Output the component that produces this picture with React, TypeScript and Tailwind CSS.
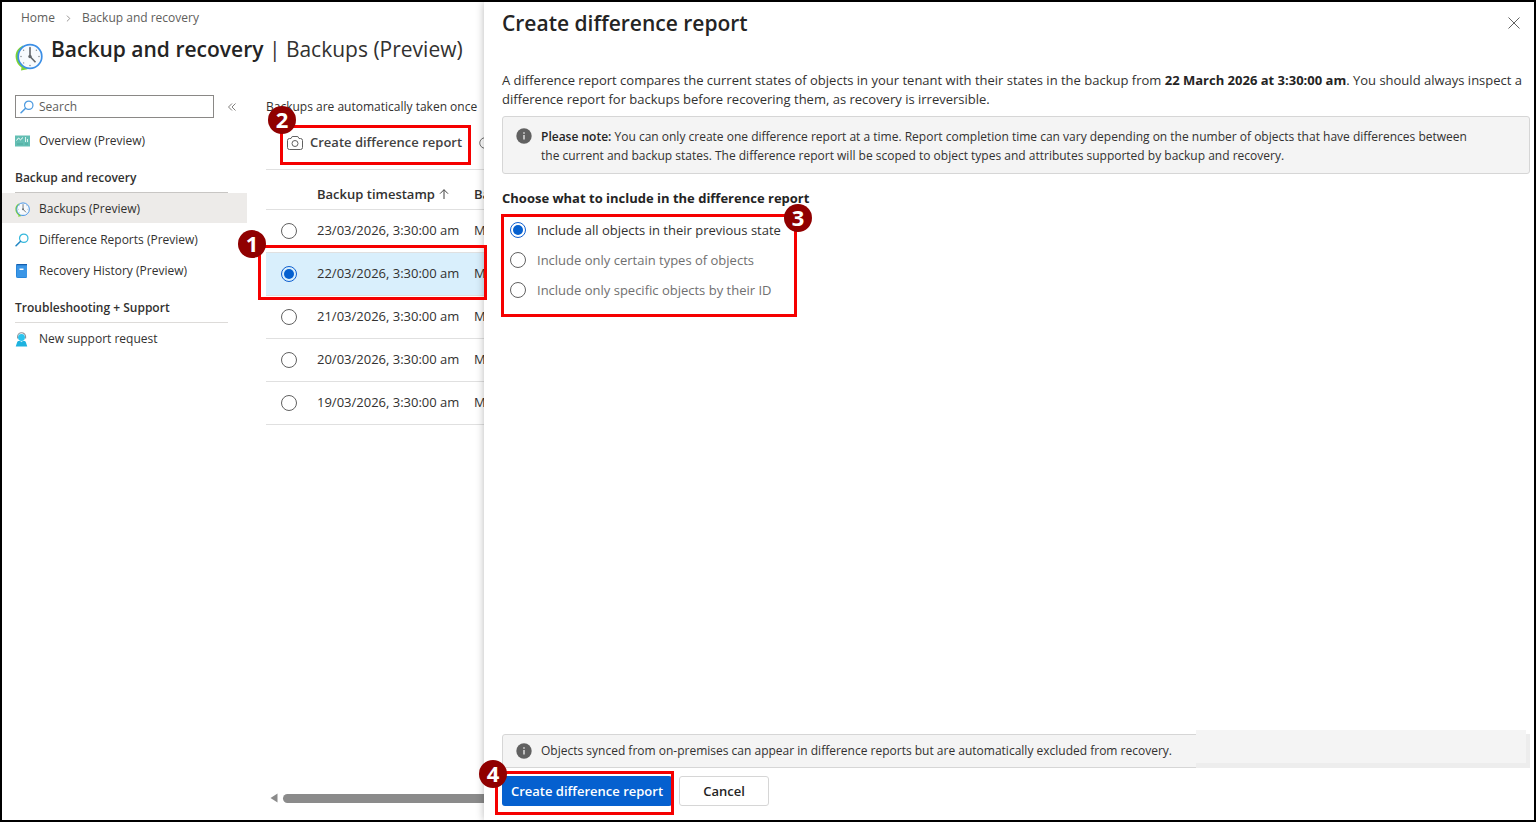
import { useState, type ReactNode } from "react";

const backups = ["23/03/2026", "22/03/2026", "21/03/2026", "20/03/2026", "19/03/2026"];

const scopes = [
  "Include all objects in their previous state",
  "Include only certain types of objects",
  "Include only specific objects by their ID",
];

const radioClass =
  "h-4 w-4 shrink-0 appearance-none rounded-full border border-[#616161] bg-white bg-clip-content p-[2px] checked:border-[#0f5fd0] checked:bg-[#0560cf]";

function ClockIcon({ className }: { className: string }) {
  return (
    <svg viewBox="0 0 28 28" className={className} aria-hidden="true">
      <path d="M8 2.500C2 5.500 0 10 .8 15.500c.6 4 2.700 7 5.700 9L6 27.500l6.500-1.300-4-5.700Z" fill="#7bd335" />
      <circle cx="15" cy="13.500" r="11.800" fill="#f7fafd" stroke="#3c8fe6" strokeWidth="1.700" />
      <g fill="#8d9296">
        <circle cx="15" cy="4.500" r=".8" />
        <circle cx="15" cy="22.500" r=".8" />
        <circle cx="6" cy="13.500" r=".8" />
        <circle cx="24" cy="13.500" r=".8" />
        <circle cx="8.600" cy="7.200" r=".7" />
        <circle cx="21.400" cy="7.200" r=".7" />
        <circle cx="8.600" cy="19.900" r=".7" />
      </g>
      <path d="M15 4.500v9l5.500 5.800" fill="none" stroke="#62676c" strokeWidth="1.600" />
      <circle cx="15" cy="13.500" r="1.700" fill="#62676c" />
    </svg>
  );
}

function LensIcon({ color, handle }: { color: string; handle: string }) {
  return (
    <svg viewBox="0 0 16 16" className="h-[14px] w-[14px] shrink-0" fill="none" aria-hidden="true">
      <circle cx="10" cy="6" r="4.800" stroke={color} strokeWidth="1.400" />
      <path d="M6.400 9.400 1.200 14.600" stroke={handle} strokeWidth="1.800" strokeLinecap="round" />
    </svg>
  );
}

function OverviewIcon() {
  return (
    <svg viewBox="0 0 15 12" className="h-[12px] w-[15px]" aria-hidden="true">
      <path d="M0 .5h15v11H0z" fill="#63beb3" />
      <path d="M1.500 5.500 3.500 3l2 1.800L8 2.500" fill="none" stroke="#fff" />
      <path d="M10 2h1v5h-1zM12 4h1v3h-1z" fill="#d9f3ef" />
      <path d="M2 8.500h6v1H2zM10 8.500h3v1h-3z" fill="#4fa99e" />
    </svg>
  );
}

function BookIcon() {
  return (
    <svg viewBox="0 0 13 15" className="h-[15px] w-[13px]" aria-hidden="true">
      <path d="M1 2a2 2 0 0 1 2-2h8.500v14H3a2 2 0 0 1-2-2Z" fill="#1676cf" />
      <path d="M1.500 1h10.500v12.500H1.500z" fill="#3b96e6" />
      <path d="M1 1.500C1 .6 1.600 0 2.500 0H12v1.300H1Z" fill="#145fae" />
      <path d="M4.500 4.500h4v1.500h-4z" fill="#fff" />
    </svg>
  );
}

function SupportIcon() {
  return (
    <svg viewBox="0 0 14 16" className="h-[15px] w-[13px]" aria-hidden="true">
      <path d="M2.800 7V5a4.300 4.300 0 0 1 8.600 0v2" fill="none" stroke="#8b9299" strokeWidth="1.200" />
      <circle cx="7" cy="5.800" r="3.700" fill="#2bc3ee" />
      <path d="M.8 15.500 2.300 11c.3-.9 1-1.400 1.900-1.400h5.600c.9 0 1.600.5 1.900 1.400l1.500 4.500Z" fill="#1db2df" />
      <path d="M5.500 9.600 7 11l1.500-1.400Z" fill="#bff0fc" />
    </svg>
  );
}

function CameraIcon() {
  return (
    <svg viewBox="0 0 16 16" className="h-4 w-4 shrink-0" fill="none" stroke="#616161" aria-hidden="true">
      <path d="M5.200 1.500h5.600l1.200 2h1.500a2 2 0 0 1 2 2v7a2 2 0 0 1-2 2h-11a2 2 0 0 1-2-2v-7a2 2 0 0 1 2-2H4Z" strokeLinejoin="round" />
      <circle cx="8" cy="8.500" r="3" />
    </svg>
  );
}

function InfoIcon() {
  return (
    <svg viewBox="0 0 16 16" className="h-4 w-4 shrink-0" aria-hidden="true">
      <circle cx="8" cy="8" r="7.700" fill="#616161" />
      <path d="M7.300 7h1.400v4.500H7.300zM7.300 4.300h1.400v1.500H7.300z" fill="#e6e6e6" />
    </svg>
  );
}

function NavItem({ icon, label, active }: { icon: ReactNode; label: string; active?: boolean }) {
  return (
    <a
      href="#"
      className={`flex h-[30px] items-center gap-2 pt-[2px] pl-[13px] text-xs text-[#323130] ${
        active ? "bg-[#edebe9]" : ""
      }`}
    >
      <span className="flex w-4 shrink-0">{icon}</span>
      {label}
    </a>
  );
}

function Sidebar() {
  return (
    <nav className="w-[245px] shrink-0">
      <div className="flex h-[23px] items-center pl-[13px]">
        <label className="flex h-[23px] w-[199px] items-center gap-[5px] border border-[#8a8886] px-1">
          <LensIcon color="#4f9be0" handle="#4f9be0" />
          <input
            type="text"
            placeholder="Search"
            aria-label="Search"
            className="w-full text-xs text-[#323130] outline-none placeholder:text-[#605e5c]"
          />
        </label>
        <button aria-label="Collapse menu" className="ml-[14px]">
          <svg viewBox="0 0 8 8" className="h-2 w-2" fill="none" stroke="#605e5c" aria-hidden="true">
            <path d="M4 .5.500 4 4 7.500M7.500.5 4 4l3.500 3.500" strokeWidth=".8" />
          </svg>
        </button>
      </div>
      <div className="mt-[7px]">
        <NavItem icon={<OverviewIcon />} label="Overview (Preview)" />
      </div>
      <h2 className="mt-[12px] mr-[19px] ml-[13px] h-[26px] border-b border-[#c8c6c4] text-xs leading-[22px] font-semibold text-[#323130]">
        Backup and recovery
      </h2>
      <div className="flex flex-col gap-px">
        <NavItem icon={<ClockIcon className="h-[15px] w-[15px]" />} label="Backups (Preview)" active />
        <NavItem icon={<LensIcon color="#35b8dc" handle="#2488c4" />} label="Difference Reports (Preview)" />
        <NavItem icon={<BookIcon />} label="Recovery History (Preview)" />
      </div>
      <h2 className="mt-[12px] mr-[19px] ml-[13px] h-[26px] border-b border-[#dddbd9] text-xs leading-[22px] font-semibold text-[#323130]">
        Troubleshooting + Support
      </h2>
      <NavItem icon={<SupportIcon />} label="New support request" />
    </nav>
  );
}

function BackupList() {
  const [selected, setSelected] = useState(1);

  return (
    <main className="ml-[19px] flex min-w-0 flex-1 flex-col overflow-hidden whitespace-nowrap">
      <p className="mt-[2px] text-xs leading-5">Backups are automatically taken once</p>
      <div className="mt-[8px] flex h-[45px] items-start gap-[17px] border-b border-[#e0e0e0] pl-[21px]">
        <button className="flex h-9 items-center gap-[7px] text-[13px] font-semibold text-[#424242]">
          <CameraIcon />
          Create difference report
        </button>
        <button aria-label="Refresh" className="flex h-9 items-center">
          <svg viewBox="0 0 16 16" className="h-[12px] w-[12px]" fill="none" stroke="#424242" aria-hidden="true">
            <circle cx="8" cy="8" r="7" />
          </svg>
        </button>
      </div>
      <table className="w-[600px] table-fixed text-left text-[13px] text-[#323130]">
        <thead>
          <tr className="h-[39px] border-b border-[#e0e0e0]">
            <th className="w-[51px]" aria-label="Select" />
            <th className="w-[157px] pt-[10px] font-semibold">
              <span className="flex items-center gap-1">
                Backup timestamp
                <svg viewBox="0 0 10 10" className="h-[10px] w-[10px]" fill="none" stroke="#424242" aria-hidden="true">
                  <path d="M5 10V.7M1 4.700l4-4 4 4" />
                </svg>
              </span>
            </th>
            <th className="pt-[10px] font-semibold">Backup type</th>
          </tr>
        </thead>
        <tbody>
          {backups.map((day, i) => (
            <tr
              key={day}
              className={`h-[43px] border-b border-[#e0e0e0] ${selected === i ? "bg-[#d9effc]" : ""}`}
            >
              <td className="pl-[15px]">
                <input
                  type="radio"
                  name="backup"
                  aria-label={day}
                  checked={selected === i}
                  onChange={() => setSelected(i)}
                  className={`block ${radioClass}`}
                />
              </td>
              <td>{day}, 3:30:00 am</td>
              <td>Microsoft Entra</td>
            </tr>
          ))}
        </tbody>
      </table>
      <div className="mt-auto mb-[17px] flex items-center gap-[5px] pl-1">
        <svg viewBox="0 0 8 10" className="h-[10px] w-2 shrink-0" aria-hidden="true">
          <path d="M7.500.5v9L.5 5Z" fill="#8b8b8b" />
        </svg>
        <div className="h-[9px] w-[500px] shrink-0 rounded-full bg-[#8b8b8b]" />
      </div>
    </main>
  );
}

function ReportPanel() {
  const [scope, setScope] = useState(0);

  return (
    <section className="z-10 flex min-w-0 flex-1 flex-col bg-white pr-1 pl-[18px] text-[13px] leading-[19px] text-[#323130] shadow-[0_0_8px_rgba(0,0,0,0.28)]">
      <header className="flex h-[42px] items-center justify-between pr-[10px]">
        <h2 className="text-[21px] font-semibold text-[#242424]">Create difference report</h2>
        <button aria-label="Close">
          <svg viewBox="0 0 12 12" className="h-3 w-3" stroke="#616161" aria-hidden="true">
            <path d="m.5.500 11 11M11.500.5l-11 11" />
          </svg>
        </button>
      </header>
      <p className="mt-[27px]">
        A difference report compares the current states of objects in your tenant with their states in the backup from{" "}
        <b className="text-[#242424]">22 March 2026 at 3:30:00 am</b>. You should always inspect a difference report for
        backups before recovering them, as recovery is irreversible.
      </p>
      <div className="mt-[7px] flex gap-[9px] rounded-[3px] border border-[#d6d6d6] bg-[#f4f4f4] px-[13px] pt-[10px] pb-2 text-xs leading-[19px]">
        <span className="pt-px">
          <InfoIcon />
        </span>
        <p>
          <b className="font-semibold text-[#242424]">Please note:</b> You can only create one difference report at a
          time. Report completion time can vary depending on the number of objects that have differences between
          <br />
          the current and backup states. The difference report will be scoped to object types and attributes supported
          by backup and recovery.
        </p>
      </div>
      <fieldset className="mt-[15px]">
        <legend className="font-bold text-[#242424]">Choose what to include in the difference report</legend>
        <div className="mt-[7px]">
          {scopes.map((label, i) => (
            <label
              key={label}
              className={`flex h-[30px] items-center gap-[11px] pl-[8px] ${
                scope === i ? "text-[#323130]" : "text-[#707070]"
              }`}
            >
              <input
                type="radio"
                name="scope"
                checked={scope === i}
                onChange={() => setScope(i)}
                className={radioClass}
              />
              {label}
            </label>
          ))}
        </div>
      </fieldset>
      <footer className="mt-auto pb-[14px]">
        <div className="relative flex h-[34px] items-center gap-[9px] rounded-[3px] border border-[#d6d6d6] bg-[#f4f4f4] px-[13px] text-xs">
          <InfoIcon />
          <p>Objects synced from on-premises can appear in difference reports but are automatically excluded from recovery.</p>
          <div className="absolute -top-px -right-px -bottom-px left-[693px] bg-[#ededed]" />
          <div className="absolute -top-[5px] right-[3px] bottom-1 left-[693px] bg-[#f4f4f4]" />
        </div>
        <div className="mt-2 flex gap-[7px]">
          <button className="h-[30px] w-[170px] rounded-[3px] bg-[#0560cf] font-semibold text-white">
            Create difference report
          </button>
          <button className="h-[30px] w-[90px] rounded-[3px] border border-[#d6d6d6] font-semibold text-[#242424]">
            Cancel
          </button>
        </div>
      </footer>
    </section>
  );
}

const callouts = [
  { n: 1, box: "top-[243px] left-[256px] h-[55px] w-[229px]", badge: "-top-[18px] -left-[23px]" },
  { n: 2, box: "top-[123px] left-[278px] h-[40px] w-[191px]", badge: "-top-[22px] -left-[15px]" },
  { n: 3, box: "top-[212px] left-[499px] h-[103px] w-[296px]", badge: "-top-[13px] left-[280px]" },
  { n: 4, box: "bottom-[5px] left-[493px] h-[44px] w-[179px]", badge: "-top-[14px] -left-[19px]" },
];

export default function App() {
  return (
    <div className="relative flex min-h-screen overflow-hidden border-2 border-black bg-white font-['Open_Sans','Noto_Sans',sans-serif] text-[#323130]">
      <div className="flex w-[482px] shrink-0 flex-col">
        <div className="flex h-8 items-center gap-[11px] pl-[19px] text-xs text-[#605e5c]">
          <a href="#">Home</a>
          <svg viewBox="0 0 5 8" className="h-[7px] w-[5px]" fill="none" stroke="#8a8886" aria-hidden="true">
            <path d="m.7.700 3.300 3.300-3.300 3.300" />
          </svg>
          <a href="#">Backup and recovery</a>
        </div>
        <div className="flex h-[61px] items-start gap-2 pl-[13px]">
          <ClockIcon className="mt-[9px] h-[28px] w-[28px] shrink-0" />
          <h1 className="text-[21px] leading-[30px] whitespace-nowrap">
            <span className="font-semibold text-[#242424]">Backup and recovery</span> | Backups (Preview)
          </h1>
        </div>
        <div className="flex flex-1">
          <Sidebar />
          <BackupList />
        </div>
      </div>
      <ReportPanel />

      {callouts.map((c) => (
        <div key={c.n} className={`pointer-events-none absolute z-20 border-3 border-[#f50000] ${c.box}`}>
          <span
            className={`absolute flex h-[28px] w-[28px] items-center justify-center rounded-full bg-[#900000] pb-[2px] text-[22px] leading-none font-bold text-white ${c.badge}`}
          >
            {c.n}
          </span>
        </div>
      ))}
    </div>
  );
}
